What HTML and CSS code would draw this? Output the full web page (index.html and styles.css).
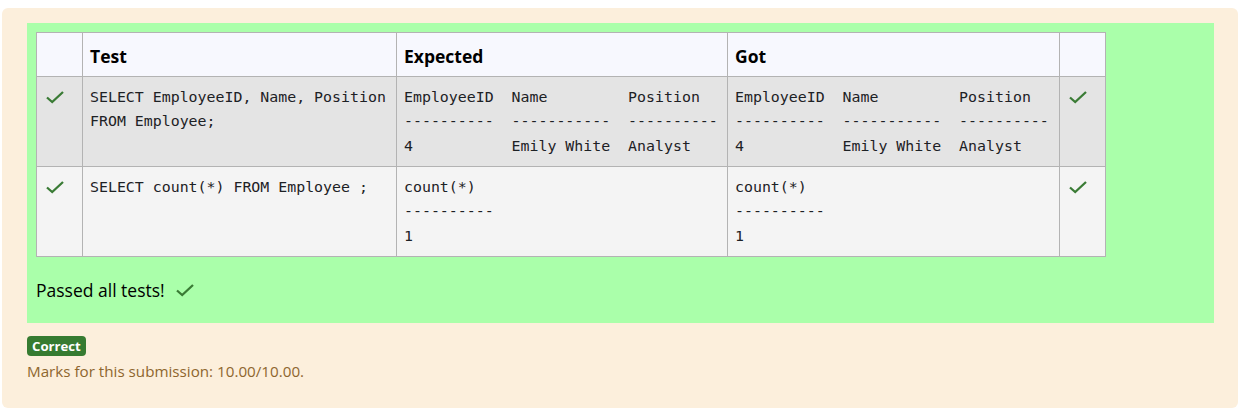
FILE: index.html
```html
<!DOCTYPE html>
<html>
<head>
<meta charset="utf-8">
<link rel="stylesheet" href="styles.css">
</head>
<body>
<div class="outcome">
  <div class="feedback">
    <table class="results">
      <colgroup>
        <col class="c-icon"><col class="c-test"><col class="c-exp"><col class="c-got"><col class="c-icon2">
      </colgroup>
      <thead>
        <tr><th></th><th>Test</th><th>Expected</th><th>Got</th><th></th></tr>
      </thead>
      <tbody>
        <tr class="r0">
          <td class="ico"><svg class="tick" viewBox="0 0 20 14"><path d="M2 7.5 L7.2 12 L18 2"/></svg></td>
          <td><pre>SELECT EmployeeID, Name, Position
FROM Employee;</pre></td>
          <td><pre>EmployeeID  Name         Position
----------  -----------  ----------
4           Emily White  Analyst</pre></td>
          <td><pre>EmployeeID  Name         Position
----------  -----------  ----------
4           Emily White  Analyst</pre></td>
          <td class="ico"><svg class="tick" viewBox="0 0 20 14"><path d="M2 7.5 L7.2 12 L18 2"/></svg></td>
        </tr>
        <tr class="r1">
          <td class="ico"><svg class="tick" viewBox="0 0 20 14"><path d="M2 7.5 L7.2 12 L18 2"/></svg></td>
          <td><pre>SELECT count(*) FROM Employee ;</pre></td>
          <td><pre>count(*)
----------
1</pre></td>
          <td><pre>count(*)
----------
1</pre></td>
          <td class="ico"><svg class="tick" viewBox="0 0 20 14"><path d="M2 7.5 L7.2 12 L18 2"/></svg></td>
        </tr>
      </tbody>
    </table>
    <p class="passed">Passed all tests! <svg class="tick" viewBox="0 0 20 14"><path d="M2 7.5 L7.2 12 L18 2"/></svg></p>
  </div>
  <span class="badge">Correct</span>
  <div class="marks">Marks for this submission: 10.00/10.00.</div>
</div>
</body>
</html>
```
FILE: styles.css
```css
html, body { background: #ffffff; }
body {
  margin: 8px 1px 0 2px;
  font-family: "Open Sans", "Noto Sans", sans-serif;
  color: #000;
}
.outcome {
  background: #fcefdc;
  border-radius: 6px;
  padding: 15px 24px 26px 25px;
  height: 400px;
  box-sizing: border-box;
}
.feedback {
  background: #aaffaa;
  padding: 9px 9px 0 9px;
  height: 300px;
  box-sizing: border-box;
}
.results {
  border-collapse: collapse;
  table-layout: fixed;
  width: 1069px;
}
.c-icon { width: 46px; }
.c-test { width: 314px; }
.c-exp { width: 331px; }
.c-got { width: 332px; }
.c-icon2 { width: 46px; }
.results th, .results td {
  border: 1px solid #b3b3b3;
  text-align: left;
  vertical-align: top;
  padding: 8px;
}
.results th {
  background: #f7f8fe;
  font-size: 17.5px;
  font-weight: 700;
  height: 44px;
  box-sizing: border-box;
  padding: 11px 8px 8px 7px;
  line-height: 24px;
}
.results tr.r0 td { background: #e4e4e4; height: 90px; box-sizing: border-box; }
.results tr.r1 td { background: #f4f4f4; height: 90px; box-sizing: border-box; }
.results td { padding-left: 7px; }
.results pre {
  margin: 0;
  font-family: "DejaVu Sans Mono", monospace;
  font-size: 14.9px;
  line-height: 24.3px;
  color: #1d2125;
}
.results td.ico { padding: 10px 0 0 8px; }
.tick {
  width: 20px;
  height: 14px;
  fill: none;
  stroke: #3a7b35;
  stroke-width: 2.3;
}
.passed {
  margin: 0;
  padding: 21px 0 0 0;
  font-size: 17.5px;
  line-height: 24px;
  display: flex;
  align-items: center;
  gap: 10px;
}
.badge {
  display: inline-block;
  margin-top: 13px;
  background: #367b31;
  color: #fff;
  font-weight: 700;
  font-size: 13.2px;
  line-height: 20px;
  padding: 0 5px;
  border-radius: 4px;
}
.marks {
  color: #8e662e;
  font-size: 15.2px;
  line-height: 22px;
  margin-top: 4px;
}
```
